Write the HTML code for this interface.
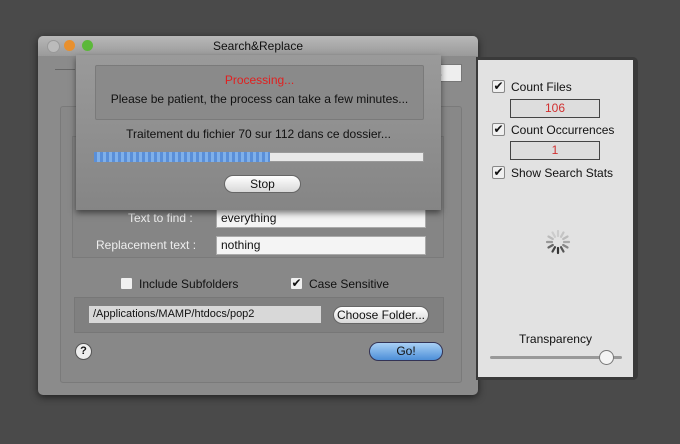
<!DOCTYPE html>
<html><head><style>
body{margin:0;width:680px;height:444px;background:#4a4a4a;position:relative;overflow:hidden;font-family:"Liberation Sans",sans-serif;font-size:12px;color:#111}
.a{position:absolute}
.win{left:38px;top:36px;width:440px;height:359px;background:#8b8b8b;border-radius:5px;box-shadow:0 2px 8px rgba(0,0,0,.6)}
.tb{left:0;top:0;width:440px;height:20px;background:linear-gradient(#b8b8b8,#9a9a9a);border-radius:5px 5px 0 0;text-align:center;line-height:20px;font-size:12px}
.dot{width:11px;height:11px;border-radius:50%;top:4px}
.drawer{left:476px;top:57px;width:162px;height:323px;background:#3a3a3a;border-radius:0 5px 5px 0}
.dr{left:478px;top:60px;width:155px;height:317px;background:#e2e2e2}
.field{background:#f4f4f4;border:1px solid #aaa;height:17px;line-height:17px;padding-left:4px;font-size:12px}
.cb{width:11px;height:11px;background:#f0f0f0;border:1px solid #888;border-radius:2px;font-size:12px;line-height:10px;text-align:center}
.btn{background:linear-gradient(#fff,#d8d8d8);border:1px solid #666;border-radius:10px;text-align:center;font-size:12px}
</style></head><body>
<div class="a win">
 <div class="a tb">Search&amp;Replace</div>
 <div class="a dot" style="left:9px;background:#bbb;border:1px solid #999"></div>
 <div class="a dot" style="left:26px;background:#e8902e"></div>
 <div class="a dot" style="left:44px;background:#5cb83a"></div>
 <div class="a" style="left:17px;top:33px;width:20px;border-top:1px solid #666"></div>
 <div class="a" style="left:22px;top:70px;width:400px;height:275px;border:1px solid #7a7a7a;background:#888;border-radius:3px"></div>
 <div class="a" style="left:34px;top:100px;width:370px;height:120px;border:1px solid #7a7a7a;background:#858585"></div>
 <div class="a" style="left:90px;top:175px;color:#eee;font-size:12px">Text to find :</div>
 <div class="a field" style="left:178px;top:173px;width:204px">everything</div>
 <div class="a" style="left:58px;top:202px;color:#eee;font-size:12px">Replacement text :</div>
 <div class="a field" style="left:178px;top:200px;width:204px">nothing</div>
 <div class="a cb" style="left:82px;top:241px"></div>
 <div class="a" style="left:101px;top:241px">Include Subfolders</div>
 <div class="a cb" style="left:252px;top:241px">✔</div>
 <div class="a" style="left:271px;top:241px">Case Sensitive</div>
 <div class="a" style="left:36px;top:261px;width:368px;height:34px;background:#808080;border:1px solid #777"></div>
 <div class="a" style="left:51px;top:270px;width:228px;height:17px;background:#d8d8d8;font-size:11px;line-height:17px;padding-left:4px">/Applications/MAMP/htdocs/pop2</div>
 <div class="a btn" style="left:295px;top:270px;width:94px;height:16px;line-height:16px">Choose Folder...</div>
 <div class="a" style="left:37px;top:307px;width:15px;height:15px;border-radius:50%;background:#eee;border:1px solid #555;text-align:center;font-size:11px;font-weight:bold;line-height:15px">?</div>
 <div class="a btn" style="left:331px;top:306px;width:72px;height:17px;line-height:17px;background:linear-gradient(#a9d0f5,#4d8fd8);border-color:#335">Go!</div>
 <div class="a" style="left:390px;top:28px;width:32px;height:16px;background:#eee;border:1px solid #777;line-height:16px;font-size:12px">ns</div>
</div>
<div class="a" style="left:76px;top:55px;width:365px;height:155px;background:linear-gradient(#9a9a9a,#858585);box-shadow:0 3px 6px rgba(0,0,0,.5)"></div>
<div class="a" style="left:95px;top:65px;width:327px;height:53px;background:#8a8a8a;border:1px solid #7a7a7a;border-radius:2px"></div>
<div class="a" style="left:95px;top:73px;width:329px;text-align:center;color:#e02020;font-size:12px">Processing...</div>
<div class="a" style="left:95px;top:92px;width:329px;text-align:center;font-size:12px">Please be patient, the process can take a few minutes...</div>
<div class="a" style="left:76px;top:127px;width:365px;text-align:center;font-size:12px">Traitement du fichier 70 sur 112 dans ce dossier...</div>
<div class="a" style="left:94px;top:152px;width:328px;height:8px;background:#e8e8e8;border:1px solid #999"></div>
<div class="a" style="left:94px;top:152px;width:176px;height:10px;background:repeating-linear-gradient(90deg,#5a8fd8 0 3px,#7fb0ea 3px 6px)"></div>
<div class="a btn" style="left:224px;top:175px;width:75px;height:16px;line-height:16px">Stop</div>
<div class="a drawer"></div>
<div class="a dr"></div>
<div class="a cb" style="left:492px;top:80px">✔</div><div class="a" style="left:511px;top:80px">Count Files</div>
<div class="a" style="left:510px;top:99px;width:88px;height:17px;background:#ddd;border:1px solid #444;text-align:center;color:#d03030;line-height:17px">106</div>
<div class="a cb" style="left:492px;top:123px">✔</div><div class="a" style="left:511px;top:123px">Count Occurrences</div>
<div class="a" style="left:510px;top:141px;width:88px;height:17px;background:#ddd;border:1px solid #444;text-align:center;color:#d03030;line-height:17px">1</div>
<div class="a cb" style="left:492px;top:166px">✔</div><div class="a" style="left:511px;top:166px">Show Search Stats</div>
<svg class="a" style="left:544px;top:228px" width="28" height="28" viewBox="-14 -14 28 28">
<g stroke-width="2.2" stroke-linecap="round">
<line x1="0" y1="-6" x2="0" y2="-11" stroke="#ccc" transform="rotate(0)"/>
<line x1="0" y1="-6" x2="0" y2="-11" stroke="#c4c4c4" transform="rotate(30)"/>
<line x1="0" y1="-6" x2="0" y2="-11" stroke="#bbb" transform="rotate(60)"/>
<line x1="0" y1="-6" x2="0" y2="-11" stroke="#aaa" transform="rotate(90)"/>
<line x1="0" y1="-6" x2="0" y2="-11" stroke="#888" transform="rotate(120)"/>
<line x1="0" y1="-6" x2="0" y2="-11" stroke="#555" transform="rotate(150)"/>
<line x1="0" y1="-6" x2="0" y2="-11" stroke="#333" transform="rotate(180)"/>
<line x1="0" y1="-6" x2="0" y2="-11" stroke="#444" transform="rotate(210)"/>
<line x1="0" y1="-6" x2="0" y2="-11" stroke="#666" transform="rotate(240)"/>
<line x1="0" y1="-6" x2="0" y2="-11" stroke="#999" transform="rotate(270)"/>
<line x1="0" y1="-6" x2="0" y2="-11" stroke="#bbb" transform="rotate(300)"/>
<line x1="0" y1="-6" x2="0" y2="-11" stroke="#ccc" transform="rotate(330)"/>
</g></svg>
<div class="a" style="left:478px;top:332px;width:155px;text-align:center">Transparency</div>
<div class="a" style="left:490px;top:356px;width:132px;height:3px;background:#999;border-radius:2px"></div>
<div class="a" style="left:599px;top:350px;width:13px;height:13px;border-radius:50%;background:#f4f4f4;border:1px solid #777"></div>
</body></html>
